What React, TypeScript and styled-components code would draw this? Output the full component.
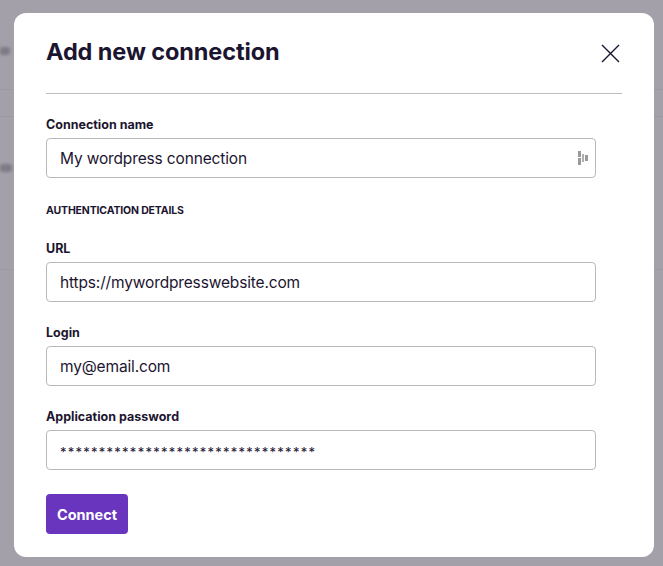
import React from "react";
import styled, { createGlobalStyle } from "styled-components";

const Global = createGlobalStyle`
  html, body { margin: 0; padding: 0; }
  body {
    width: 663px;
    height: 566px;
    overflow: hidden;
    background: #a3a0a9;
    font-family: Inter, "Noto Sans", sans-serif;
  }
`;

const Screen = styled.div`
  position: relative;
  width: 663px;
  height: 566px;
  overflow: hidden;
  background: #a3a0a9;
`;

const Backdrop = styled.div`
  position: absolute;
  inset: 0;
  display: flex;
  flex-direction: column;
  padding-top: 24px;
`;

const BgRow = styled.div<{ $h: number; $pb?: number }>`
  height: ${(p) => p.$h}px;
  padding-bottom: ${(p) => p.$pb ?? 0}px;
  flex-shrink: 0;
  box-sizing: border-box;
  border-bottom: 1px solid #9c99a2;
  display: flex;
  align-items: center;
`;

const BgBlur = styled.div<{ $w: number }>`
  width: ${(p) => p.$w}px;
  height: 8px;
  border-radius: 3px;
  background: #7e7a86;
  filter: blur(1.5px);
`;

const Modal = styled.div`
  position: absolute;
  left: 14px;
  top: 13px;
  width: 640px;
  height: 544px;
  box-sizing: border-box;
  background: #ffffff;
  border-radius: 12px;
  padding: 24px 32px 24px 32px;
  display: flex;
  flex-direction: column;
`;

const Header = styled.div`
  flex-shrink: 0;
  display: flex;
  align-items: center;
  justify-content: space-between;
  height: 57px;
  padding-bottom: 26px;
  border-bottom: 1px solid #bcbcbc;
  box-sizing: border-box;
`;

const Title = styled.h2`
  margin: 0;
  font-size: 23.5px;
  line-height: 30px;
  font-weight: 700;
  color: #1c1530;
  letter-spacing: -0.1px;
`;

const CloseButton = styled.button`
  border: 0;
  background: transparent;
  padding: 0;
  width: 20px;
  height: 20px;
  margin-right: 2px;
  margin-top: 2px;
  display: flex;
  align-items: center;
  justify-content: center;
  cursor: pointer;
`;

const Form = styled.div`
  flex-shrink: 0;
  display: flex;
  flex-direction: column;
  width: 550px;
  padding-top: 24px;
`;

const Field = styled.div`
  display: flex;
  flex-direction: column;
  gap: 6px;
  margin-bottom: 24px;
`;

const Label = styled.label`
  font-size: 12.5px;
  font-weight: 700;
  color: #1c1530;
  line-height: 14px;
`;

const Section = styled.div`
  font-size: 10.5px;
  font-weight: 700;
  color: #1c1530;
  text-transform: uppercase;
  letter-spacing: -0.15px;
  line-height: 14px;
  margin-top: 2px;
  margin-bottom: 24px;
`;

const InputBox = styled.div`
  position: relative;
  height: 40px;
  box-sizing: border-box;
  border: 1px solid #b9b8bd;
  border-radius: 4px;
  display: flex;
  align-items: center;
  padding: 0 13px;
`;

const Value = styled.span<{ $pw?: boolean }>`
  font-size: ${(p) => (p.$pw ? "13px" : "15.5px")};
  color: #1c1530;
  letter-spacing: ${(p) => (p.$pw ? "1.25px" : "-0.15px")};
  margin-top: ${(p) => (p.$pw ? "3px" : "0")};
`;

const KeyIcon = styled.svg`
  position: absolute;
  right: 6px;
  top: 12px;
`;

const ConnectButton = styled.button`
  align-self: flex-start;
  margin-top: 0;
  height: 40px;
  width: 82px;
  border: 0;
  border-radius: 4px;
  background: #6935bf;
  color: #ffffff;
  font-family: Inter, "Noto Sans", sans-serif;
  font-size: 14.5px;
  font-weight: 700;
  cursor: pointer;
`;

const fields = [
  { label: "URL", value: "https://mywordpresswebsite.com" },
  { label: "Login", value: "my@email.com" },
  { label: "Application password", value: "*********************************", pw: true },
];

export default function App() {
  return (
    <>
      <Global />
      <Screen>
        <Backdrop>
          <BgRow $h={66} $pb={12}>
            <BgBlur $w={10} />
          </BgRow>
          <BgRow $h={27} />
          <BgRow $h={153} $pb={51}>
            <BgBlur $w={12} />
          </BgRow>
        </Backdrop>
        <Modal>
          <Header>
            <Title>Add new connection</Title>
            <CloseButton aria-label="Close">
              <svg width="19" height="19" viewBox="0 0 19 19">
                <path d="M1 1L18 18M18 1L1 18" stroke="#1c1530" strokeWidth="1.4" fill="none" />
              </svg>
            </CloseButton>
          </Header>
          <Form>
            <Field>
              <Label>Connection name</Label>
              <InputBox>
                <Value>My wordpress connection</Value>
                <KeyIcon width="11" height="14" viewBox="0 0 11 14">
                  <rect x="0" y="0" width="3" height="6" fill="#9a9a9a" />
                  <rect x="0" y="7" width="3" height="7" fill="#9a9a9a" />
                  <rect x="4" y="3" width="2" height="8" fill="#b0b0b0" />
                  <rect x="7" y="4" width="3" height="6" fill="#9a9a9a" />
                </KeyIcon>
              </InputBox>
            </Field>
            <Section>Authentication details</Section>
            {fields.map((f) => (
              <Field key={f.label}>
                <Label>{f.label}</Label>
                <InputBox>
                  <Value $pw={f.pw}>{f.value}</Value>
                </InputBox>
              </Field>
            ))}
            <ConnectButton>Connect</ConnectButton>
          </Form>
        </Modal>
      </Screen>
    </>
  );
}
